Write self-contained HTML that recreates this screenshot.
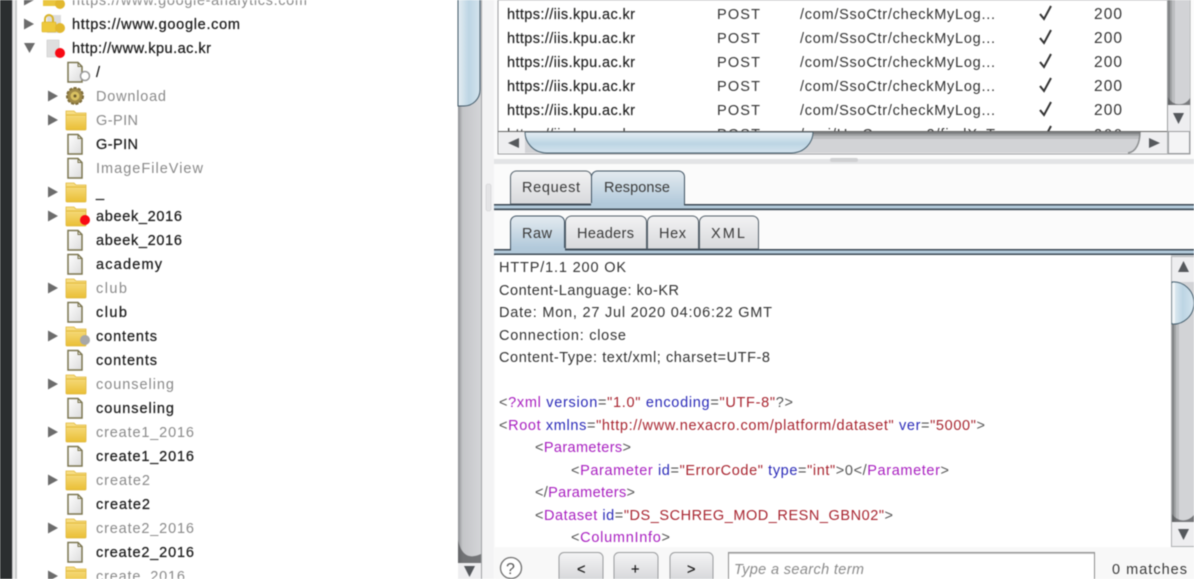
<!DOCTYPE html>
<html><head><meta charset="utf-8">
<style>
html,body{margin:0;padding:0;width:1194px;height:579px;overflow:hidden;background:#fff}
svg{display:block;filter:blur(.45px)}
text{font-family:"Liberation Sans",sans-serif;font-size:14.5px;white-space:pre}
.b{fill:#1c1c1c;stroke:#1c1c1c;stroke-width:.25px}
.g{fill:#8a8a8a}
.t{fill:#333}
.x{fill:#3a3a3a}
.m{fill:#a81fc0}.a{fill:#2a2ab8}.v{fill:#a82530}.k{fill:#555}
</style></head><body>
<svg width="1194" height="579" viewBox="0 0 1194 579" xmlns="http://www.w3.org/2000/svg">
<defs>
<linearGradient id="fold" x1="0" y1="0" x2="0" y2="1"><stop offset="0" stop-color="#f8e08a"/><stop offset="1" stop-color="#eabf35"/></linearGradient>
<linearGradient id="pg" x1="0" y1="0" x2="1" y2="1"><stop offset="0" stop-color="#fff"/><stop offset="1" stop-color="#dcdcdc"/></linearGradient>
<linearGradient id="tr" x1="0" y1="0" x2="1" y2="0"><stop offset="0" stop-color="#8d8f92"/><stop offset=".2" stop-color="#c4c5c8"/><stop offset="1" stop-color="#d4d5d8"/></linearGradient>
<linearGradient id="th" x1="0" y1="0" x2="1" y2="0"><stop offset="0" stop-color="#e6eef3"/><stop offset=".5" stop-color="#bcd5e4"/><stop offset="1" stop-color="#d5e4ee"/></linearGradient>
<linearGradient id="thh" x1="0" y1="0" x2="0" y2="1"><stop offset="0" stop-color="#e6eef3"/><stop offset=".55" stop-color="#bcd5e4"/><stop offset="1" stop-color="#d5e4ee"/></linearGradient>
<linearGradient id="tab" x1="0" y1="0" x2="0" y2="1"><stop offset="0" stop-color="#f2f2f3"/><stop offset="1" stop-color="#d8d9dc"/></linearGradient>
<linearGradient id="tabs" x1="0" y1="0" x2="0" y2="1"><stop offset="0" stop-color="#e4ebf0"/><stop offset="1" stop-color="#b0c8da"/></linearGradient>
<linearGradient id="btn" x1="0" y1="0" x2="0" y2="1"><stop offset="0" stop-color="#f4f4f5"/><stop offset="1" stop-color="#d0d1d4"/></linearGradient>
<clipPath id="rows"><rect x="499" y="0" width="668" height="132"/></clipPath>
<g id="folder"><path d="M66 -9h8l2 2h10v16a1 1 0 0 1-1 1H67a1 1 0 0 1-1-1z" fill="url(#fold)" stroke="#e0b83c" stroke-width=".8"/><path d="M66 -5h20" stroke="#e2b93a" stroke-width="1" fill="none"/></g>
<g id="page"><path d="M68 -9.500h10l4 4v15.500H68z" fill="url(#pg)" stroke="#7c7650" stroke-width="1.500"/><path d="M78 -9.500v4h4" fill="none" stroke="#7c7650" stroke-width="1"/></g>
<path id="ar" d="M48 -5.500l10 5.500-10 5.500z" fill="#6c6c6c"/>
</defs>

<!-- left edge -->
<rect x="0" y="0" width="12" height="579" fill="#2b2e2f"/>
<rect x="12" y="0" width="5" height="579" fill="#c9cacb"/>
<rect x="13" y="0" width="2" height="579" fill="#eeeeee"/>

<!-- tree -->
<g>
<g transform="translate(-24,0)"><use href="#ar"/></g>
<rect x="43" y="-4" width="15" height="10" fill="#eac63f"/><circle cx="60" cy="4" r="5" fill="#e2b82e"/>
<text x="72" y="5" textLength="235" class="g">https://www.google-analytics.com</text>
<g transform="translate(-24,24)"><use href="#ar"/></g>
<rect x="47" y="15" width="14" height="18" fill="#dcdcdc"/>
<rect x="42" y="22" width="14" height="10" rx="1" fill="#eec93c" stroke="#d6ae20" stroke-width=".6"/><path d="M45 22v-3a4 4 0 0 1 8 0v3" fill="none" stroke="#d8b228" stroke-width="2"/><circle cx="60" cy="28" r="5" fill="#e2b82e"/>
<text x="72" y="29" textLength="168" class="b">https://www.google.com</text>
<path d="M24 43h11l-5.500 10z" fill="#6c6c6c"/>
<path d="M47 40h12v17H47z" fill="#dedede" stroke="#c8c8c8" stroke-width=".6"/><circle cx="60" cy="53" r="5" fill="#f80a14"/>
<text x="72" y="53" textLength="139" class="b">http://www.kpu.ac.kr</text>

<g transform="translate(0,72)"><use href="#page"/><circle cx="85" cy="4" r="4.500" fill="#fff" stroke="#999" stroke-width="1.500"/></g>
<text x="96" y="77" class="b">/</text>

<g transform="translate(0,96)"><use href="#ar"/><circle cx="75" cy="0" r="8" fill="#a08a48" stroke="#7d6c3a" stroke-width="2" stroke-dasharray="3 1.500"/><circle cx="75" cy="0" r="4.500" fill="#d8c060"/><circle cx="75" cy="0" r="1.500" fill="#6d5d2d"/></g>
<text x="96" y="101" textLength="70" class="g">Download</text>

<g transform="translate(0,120)"><use href="#ar"/><use href="#folder"/></g>
<text x="96" y="125" textLength="42" class="g">G-PIN</text>
<g transform="translate(0,144)"><use href="#page"/></g>
<text x="96" y="149" textLength="42" class="b">G-PIN</text>
<g transform="translate(0,168)"><use href="#page"/></g>
<text x="96" y="173" textLength="107" class="g">ImageFileView</text>
<g transform="translate(0,192)"><use href="#ar"/><use href="#folder"/></g>
<text x="96" y="197" class="b">_</text>
<g transform="translate(0,216)"><use href="#ar"/><use href="#folder"/><circle cx="85" cy="4" r="5" fill="#f80a14"/></g>
<text x="96" y="221" textLength="86" class="b">abeek_2016</text>
<g transform="translate(0,240)"><use href="#page"/></g>
<text x="96" y="245" textLength="86" class="b">abeek_2016</text>
<g transform="translate(0,264)"><use href="#page"/></g>
<text x="96" y="269" textLength="66" class="b">academy</text>
<g transform="translate(0,288)"><use href="#ar"/><use href="#folder"/></g>
<text x="96" y="293" textLength="31" class="g">club</text>
<g transform="translate(0,312)"><use href="#page"/></g>
<text x="96" y="317" textLength="31" class="b">club</text>
<g transform="translate(0,336)"><use href="#ar"/><use href="#folder"/><circle cx="85" cy="4" r="5" fill="#a8a8a8"/></g>
<text x="96" y="341" textLength="61" class="b">contents</text>
<g transform="translate(0,360)"><use href="#page"/></g>
<text x="96" y="365" textLength="61" class="b">contents</text>
<g transform="translate(0,384)"><use href="#ar"/><use href="#folder"/></g>
<text x="96" y="389" textLength="78" class="g">counseling</text>
<g transform="translate(0,408)"><use href="#page"/></g>
<text x="96" y="413" textLength="78" class="b">counseling</text>
<g transform="translate(0,432)"><use href="#ar"/><use href="#folder"/></g>
<text x="96" y="437" textLength="98" class="g">create1_2016</text>
<g transform="translate(0,456)"><use href="#page"/></g>
<text x="96" y="461" textLength="98" class="b">create1_2016</text>
<g transform="translate(0,480)"><use href="#ar"/><use href="#folder"/></g>
<text x="96" y="485" textLength="54" class="g">create2</text>
<g transform="translate(0,504)"><use href="#page"/></g>
<text x="96" y="509" textLength="54" class="b">create2</text>
<g transform="translate(0,528)"><use href="#ar"/><use href="#folder"/></g>
<text x="96" y="533" textLength="98" class="g">create2_2016</text>
<g transform="translate(0,552)"><use href="#page"/></g>
<text x="96" y="557" textLength="98" class="b">create2_2016</text>
<g transform="translate(0,576)"><use href="#ar"/><use href="#folder"/></g>
<text x="96" y="581" textLength="89" class="g">create_2016</text>
</g>

<!-- tree scrollbar -->
<rect x="458" y="0" width="23" height="579" fill="url(#tr)"/>
<path d="M458 -10h22v100a16 16 0 0 1-16 16h-6z" fill="url(#th)" stroke="#3f5666" stroke-width="1"/>
<path d="M458 540c3 14 10 20 23 14v9h-23z" fill="#55575a" opacity=".75"/>
<rect x="458" y="563" width="23" height="16" fill="#eeeef0"/>
<path d="M464 566h11l-5.500 11z" fill="#55585c"/>
<rect x="481" y="0" width="1" height="579" fill="#9fa1a4"/>
<rect x="482" y="0" width="12" height="579" fill="#f3f3f4"/>
<rect x="486" y="184" width="5" height="27" rx="2" fill="#e4e4e6" stroke="#d0d0d2" stroke-width=".6"/>

<!-- table -->
<rect x="494" y="0" width="700" height="579" fill="#fbfbfb"/>
<rect x="498" y="0" width="692" height="154" fill="#fff" stroke="#9c9ea0" stroke-width="1"/>
<g clip-path="url(#rows)">
<g id="r1"><text x="507" y="19" textLength="128" class="b" style="stroke-width:.15px">https://iis.kpu.ac.kr</text><text x="717" y="19" textLength="43" class="t">POST</text><text x="800" y="19" textLength="195" class="t">/com/SsoCtr/checkMyLog...</text><path d="M1040 14l4 5 7-13" fill="none" stroke="#333" stroke-width="2"/><text x="1094" y="19" textLength="28" class="t" style="font-size:15.500px">200</text></g>
<g transform="translate(0,24)"><use href="#r1"/></g>
<g transform="translate(0,48)"><use href="#r1"/></g>
<g transform="translate(0,72)"><use href="#r1"/></g>
<g transform="translate(0,96)"><use href="#r1"/></g>
<g transform="translate(0,120)"><text x="507" y="19" textLength="128" class="t">https://iis.kpu.ac.kr</text><text x="717" y="19" textLength="43" class="t">POST</text><text x="800" y="19" textLength="195" class="t">/ucri/UsrCommon2/findXsT</text><path d="M1040 14l4 5 7-13" fill="none" stroke="#333" stroke-width="2"/><text x="1094" y="19" textLength="28" class="t">200</text></g>
</g>
<!-- table v scrollbar: stepped strips -->
<rect x="1168" y="0" width="22" height="105" fill="#d2d3d6"/>
<rect x="1168" y="0" width="2" height="105" fill="#808284"/>
<rect x="1170" y="0" width="2" height="105" fill="#a0a2a4"/>
<rect x="1172" y="0" width="3" height="105" fill="#bcbdc0"/>
<path d="M1168 97c3 6 8 8 14 7 4-1 6-3 8-6v7h-22z" fill="#55575a" opacity=".7"/>
<rect x="1168" y="105" width="22" height="27" fill="#eeeef0"/>
<path d="M1173 113h11l-5.500 11z" fill="#55585c"/>
<rect x="1167" y="0" width="1" height="132" fill="#9c9ea0"/>
<!-- table h scrollbar -->
<rect x="499" y="132" width="641" height="21" fill="#d2d3d6"/>
<rect x="499" y="132" width="641" height="2" fill="#808284"/>
<rect x="499" y="134" width="641" height="2" fill="#a0a2a4"/>
<rect x="499" y="136" width="641" height="3" fill="#bcbdc0"/>
<rect x="499" y="132" width="26" height="21" fill="#eeeef0"/>
<path d="M508 143l11-5v10z" fill="#55585c"/>
<path d="M525 132h288c0 10-8 21-22 21H547c-14 0-22-11-22-21z" fill="url(#thh)" stroke="#47606f" stroke-width="1"/>
<path d="M1128 153c8-1 12-10 12-21h2v21z" fill="#eeeef0"/>
<path d="M1128 153c8-1 12-10 12-21" fill="none" stroke="#6a6c6e" stroke-width="1.500" opacity=".7"/>
<rect x="1142" y="132" width="26" height="21" fill="#eeeef0"/>
<path d="M1149 138l11 5-11 5z" fill="#55585c"/>
<rect x="1167" y="132" width="1" height="22" fill="#b0b2b4"/>
<rect x="1168" y="132" width="22" height="22" fill="#f4f4f5"/>
<rect x="1168.500" y="131.500" width="21" height="22" fill="none" stroke="#9c9ea0" stroke-width="1"/>
<rect x="498" y="131" width="669" height="1" fill="#666"/>
<!-- splitter -->
<rect x="494" y="159" width="700" height="5" fill="#e3e4e6"/>
<rect x="830" y="158" width="28" height="4" rx="2" fill="#cfd0d2"/>

<!-- outer tabs -->
<path d="M510.500 204v-27a6 6 0 0 1 6-6h69a6 6 0 0 1 6 6v27z" fill="url(#tab)" stroke="#54606a"/>
<path d="M591.500 204v-27a6 6 0 0 1 6-6h81a6 6 0 0 1 6 6v28z" fill="url(#tabs)" stroke="#3f5262"/>
<text x="522" y="192" textLength="58" class="x">Request</text>
<text x="604" y="192" textLength="66" class="x">Response</text>
<rect x="494" y="204" width="700" height="1.500" fill="#3d4a56"/>
<rect x="591" y="203" width="93" height="3" fill="#b2c9da"/>
<rect x="494" y="205.500" width="700" height="3" fill="#b2c9da"/>
<rect x="494" y="208.500" width="700" height="1.700" fill="#3d4a56"/>

<!-- inner tabs -->
<path d="M510.500 249v-27a6 6 0 0 1 6-6h42a6 6 0 0 1 6 6v27z" fill="url(#tabs)" stroke="#3f5262"/>
<path d="M565.500 249v-27a6 6 0 0 1 6-6h69a6 6 0 0 1 6 6v27z" fill="url(#tab)" stroke="#54606a"/>
<path d="M647.500 249v-27a6 6 0 0 1 6-6h39a6 6 0 0 1 6 6v27z" fill="url(#tab)" stroke="#54606a"/>
<path d="M699.500 249v-27a6 6 0 0 1 6-6h47a6 6 0 0 1 6 6v27z" fill="url(#tab)" stroke="#54606a"/>
<text x="522" y="238" textLength="30" class="x">Raw</text>
<text x="577" y="238" textLength="57" class="x">Headers</text>
<text x="659" y="238" textLength="27" class="x">Hex</text>
<text x="711" y="238" textLength="34" class="x">XML</text>
<rect x="494" y="249" width="700" height="1.500" fill="#3d4a56"/>
<rect x="511" y="248" width="54" height="3" fill="#b2c9da"/>
<rect x="494" y="250.500" width="700" height="3" fill="#b2c9da"/>
<rect x="494" y="253.500" width="700" height="1.700" fill="#3d4a56"/>

<!-- message body -->
<rect x="495" y="255" width="676" height="292" fill="#fff"/>
<text x="499" y="272" textLength="127" class="t">HTTP/1.1 200 OK</text>
<text x="499" y="295" textLength="180" class="t">Content-Language: ko-KR</text>
<text x="499" y="317" textLength="273" class="t">Date: Mon, 27 Jul 2020 04:06:22 GMT</text>
<text x="499" y="340" textLength="127" class="t">Connection: close</text>
<text x="499" y="362" textLength="271" class="t">Content-Type: text/xml; charset=UTF-8</text>
<text x="499" y="407" textLength="294"><tspan class="k">&lt;</tspan><tspan class="m">?xml</tspan><tspan class="a"> version</tspan><tspan class="k">=</tspan><tspan class="v">"1.0"</tspan><tspan class="a"> encoding</tspan><tspan class="k">=</tspan><tspan class="v">"UTF-8"</tspan><tspan class="k">?&gt;</tspan></text>
<text x="499" y="430" textLength="486"><tspan class="k">&lt;</tspan><tspan class="m">Root</tspan><tspan class="a"> xmlns</tspan><tspan class="k">=</tspan><tspan class="v">"http://www.nexacro.com/platform/dataset"</tspan><tspan class="a"> ver</tspan><tspan class="k">=</tspan><tspan class="v">"5000"</tspan><tspan class="k">&gt;</tspan></text>
<text x="535" y="452" textLength="96"><tspan class="k">&lt;</tspan><tspan class="m">Parameters</tspan><tspan class="k">&gt;</tspan></text>
<text x="571" y="475" textLength="378"><tspan class="k">&lt;</tspan><tspan class="m">Parameter</tspan><tspan class="a"> id</tspan><tspan class="k">=</tspan><tspan class="v">"ErrorCode"</tspan><tspan class="a"> type</tspan><tspan class="k">=</tspan><tspan class="v">"int"</tspan><tspan class="k">&gt;0&lt;/</tspan><tspan class="m">Parameter</tspan><tspan class="k">&gt;</tspan></text>
<text x="535" y="497" textLength="100"><tspan class="k">&lt;/</tspan><tspan class="m">Parameters</tspan><tspan class="k">&gt;</tspan></text>
<text x="535" y="520" textLength="358"><tspan class="k">&lt;</tspan><tspan class="m">Dataset</tspan><tspan class="a"> id</tspan><tspan class="k">=</tspan><tspan class="v">"DS_SCHREG_MOD_RESN_GBN02"</tspan><tspan class="k">&gt;</tspan></text>
<text x="571" y="542" textLength="99"><tspan class="k">&lt;</tspan><tspan class="m">ColumnInfo</tspan><tspan class="k">&gt;</tspan></text>

<!-- response scrollbar -->
<rect x="1171" y="256" width="23" height="291" fill="#eeeef0"/>
<rect x="1171.500" y="256.500" width="30" height="290" fill="none" stroke="#aeb0b2"/>
<rect x="1172" y="282" width="22" height="240" fill="#d2d3d6"/>
<rect x="1172" y="282" width="2" height="240" fill="#808284"/>
<rect x="1174" y="282" width="2" height="240" fill="#a0a2a4"/>
<rect x="1176" y="282" width="3" height="240" fill="#bcbdc0"/>
<path d="M1172 514c4 6 10 7 14 6 4-1 6-3 8-5v7h-22z" fill="#55575a" opacity=".75"/>
<rect x="1172" y="522" width="22" height="24" fill="#eeeef0"/>
<path d="M1172 282c11-1 22 8 22 21s-11 22-22 21z" fill="url(#th)" stroke="#47606f" stroke-width="1"/>
<rect x="1172" y="283" width="3" height="40" fill="#f2f6f8"/>
<path d="M1178 272l5.500-11 5.500 11z" fill="#55585c"/>
<path d="M1178 529h11l-5.500 11z" fill="#55585c"/>

<!-- search bar -->
<rect x="495" y="547" width="699" height="32" fill="#f8f8f8"/>
<circle cx="511" cy="568" r="10.500" fill="#fff" stroke="#6f6f6f" stroke-width="1.300"/>
<text x="506" y="574" style="font-size:16px" fill="#555">?</text>
<rect x="559" y="552.500" width="44" height="34" rx="5" fill="url(#btn)" stroke="#9a9c9e"/>
<rect x="614" y="552.500" width="44" height="34" rx="5" fill="url(#btn)" stroke="#9a9c9e"/>
<rect x="670" y="552.500" width="43" height="34" rx="5" fill="url(#btn)" stroke="#9a9c9e"/>
<text x="577" y="574" class="b">&lt;</text>
<text x="631" y="574" class="b">+</text>
<text x="687" y="574" class="b">&gt;</text>
<rect x="728.500" y="552.500" width="366" height="32" fill="#fff" stroke="#8e8e8e"/>
<rect x="729" y="553" width="365" height="1" fill="#c8c8c8"/>
<text x="734" y="574" textLength="130" fill="#8a8a8a" style="font-style:italic">Type a search term</text>
<text x="1112" y="574" textLength="75" class="x">0 matches</text>
</svg>
</body></html>
